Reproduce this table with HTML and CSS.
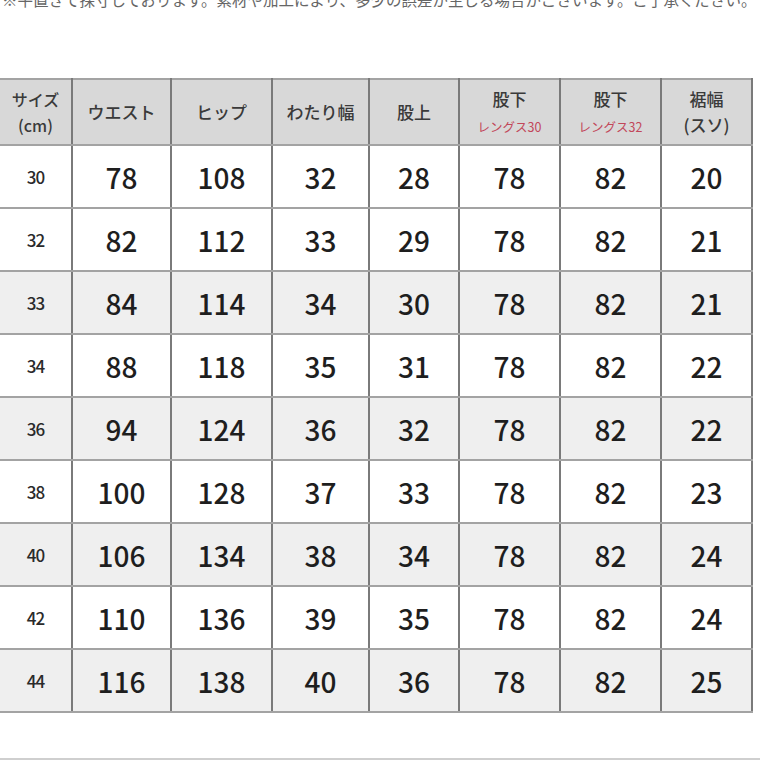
FILE: index.html
```html
<!DOCTYPE html>
<html lang="ja">
<head>
<meta charset="utf-8">
<link rel="stylesheet" href="styles.css">
</head>
<body>
<div class="note">※平置きで採寸しております。素材や加工により、多少の誤差が生じる場合がございます。ご了承ください。</div>
<table class="size">
  <colgroup>
    <col class="c1"><col class="c2"><col class="c3"><col class="c4"><col class="c5"><col class="c6"><col class="c7"><col class="c8">
  </colgroup>
  <thead>
    <tr>
      <th class="sz-h">サイズ<br>(cm)</th>
      <th>ウエスト</th>
      <th>ヒップ</th>
      <th>わたり幅</th>
      <th>股上</th>
      <th>股下<br><span class="sub">レングス30</span></th>
      <th>股下<br><span class="sub">レングス32</span></th>
      <th>裾幅<br>(スソ)</th>
    </tr>
  </thead>
  <tbody>
    <tr><td class="sz">30</td><td>78</td><td>108</td><td>32</td><td>28</td><td>78</td><td>82</td><td>20</td></tr>
    <tr><td class="sz">32</td><td>82</td><td>112</td><td>33</td><td>29</td><td>78</td><td>82</td><td>21</td></tr>
    <tr class="alt"><td class="sz">33</td><td>84</td><td>114</td><td>34</td><td>30</td><td>78</td><td>82</td><td>21</td></tr>
    <tr><td class="sz">34</td><td>88</td><td>118</td><td>35</td><td>31</td><td>78</td><td>82</td><td>22</td></tr>
    <tr class="alt"><td class="sz">36</td><td>94</td><td>124</td><td>36</td><td>32</td><td>78</td><td>82</td><td>22</td></tr>
    <tr><td class="sz">38</td><td>100</td><td>128</td><td>37</td><td>33</td><td>78</td><td>82</td><td>23</td></tr>
    <tr class="alt"><td class="sz">40</td><td>106</td><td>134</td><td>38</td><td>34</td><td>78</td><td>82</td><td>24</td></tr>
    <tr><td class="sz">42</td><td>110</td><td>136</td><td>39</td><td>35</td><td>78</td><td>82</td><td>24</td></tr>
    <tr class="alt"><td class="sz">44</td><td>116</td><td>138</td><td>40</td><td>36</td><td>78</td><td>82</td><td>25</td></tr>
  </tbody>
</table>
<div class="bottom-line"></div>
</body>
</html>
```
FILE: styles.css
```css
html, body {
  margin: 0;
  padding: 0;
  background: #ffffff;
}
body {
  width: 760px;
  height: 760px;
  overflow: hidden;
  font-family: "Noto Sans CJK JP", "Noto Sans", sans-serif;
  color: #222;
}
.note {
  height: 20px;
  margin-top: -11px;
  font-size: 15.5px;
  line-height: 20px;
  color: #666;
  white-space: nowrap;
  overflow: hidden;
  padding-left: 2px;
}
.size {
  margin-top: 69px;
  border-collapse: collapse;
  table-layout: fixed;
  width: 752px;
}
.c1 { width: 72px; }
.c2 { width: 99px; }
.c3 { width: 101px; }
.c4 { width: 97px; }
.c5 { width: 90px; }
.c6 { width: 101px; }
.c7 { width: 101px; }
.c8 { width: 91px; }
.size th, .size td {
  text-align: center;
  vertical-align: middle;
  padding: 0;
  border-left: 2px solid #7a7a7a;
  border-right: 2px solid #7a7a7a;
  border-top: 2px solid #a3a3a3;
  border-bottom: 2px solid #a3a3a3;
}
.size tr > :first-child { border-left: none; }
.size th {
  background: #d8d8d8;
  height: 64px;
  font-weight: 500;
  font-size: 17px;
  line-height: 26px;
  color: #3a3a3a;
}
.size th.sz-h { font-size: 16px; line-height: 26px; }
.size th .sub {
  font-size: 12.5px;
  line-height: 20px;
  color: #c2475a;
  font-weight: 400;
}
.size td {
  height: 61px;
  font-size: 28px;
  color: #1e1e1e;
  font-weight: 500;
  background: #ffffff;
}
.size tr.alt td { background: #efefef; }
.size td.sz {
  font-size: 17px;
  letter-spacing: -1px;
  color: #2a2a2a;
}
.bottom-line {
  margin-top: 45px;
  height: 2px;
  background: #cfcfcf;
}
```
